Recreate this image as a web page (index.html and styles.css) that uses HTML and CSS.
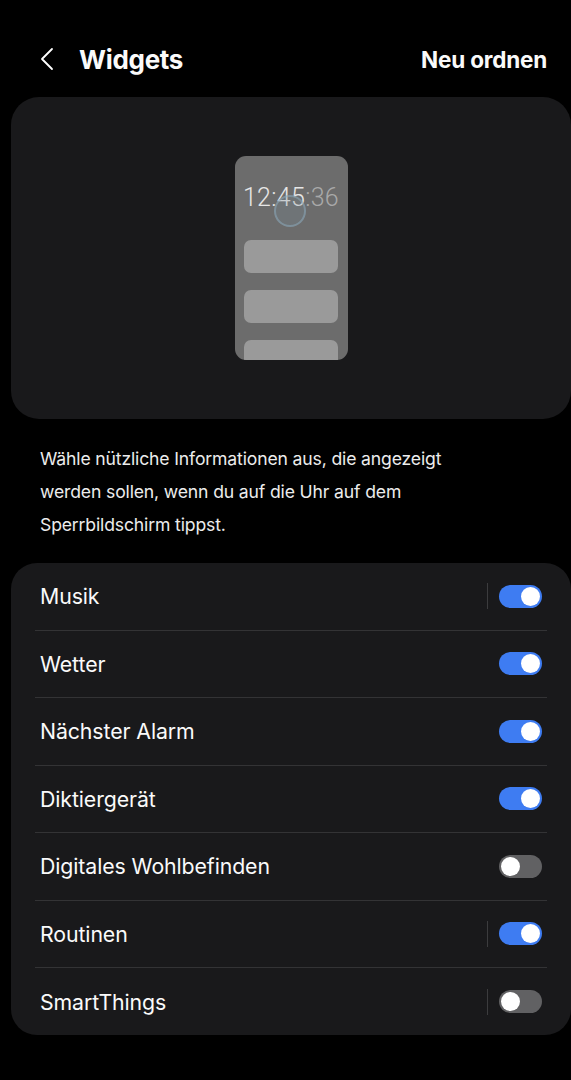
FILE: index.html
```html
<!DOCTYPE html>
<html lang="de">
<head>
    <meta charset="UTF-8">
    <meta name="viewport" content="width=device-width, initial-scale=1.0">
    <title>Widgets</title>
    <link rel="stylesheet" href="styles.css">
</head>
<body>
    <header class="topbar">
        <div class="title-wrap">
            <svg class="back" width="14" height="24" viewBox="0 0 14 24">
                <path d="M12 2 L2 12 L12 22" fill="none" stroke="#fff" stroke-width="1.8" stroke-linecap="round" stroke-linejoin="round"/>
            </svg>
            <h1>Widgets</h1>
        </div>
        <span class="action">Neu ordnen</span>
    </header>

    <section class="preview">
        <div class="phone">
            <div class="clock"><span class="hm">12:45</span>:36</div>
            <div class="tap"></div>
            <div class="slot"></div>
            <div class="slot"></div>
            <div class="slot"></div>
        </div>
    </section>

    <p class="desc">Wähle nützliche Informationen aus, die angezeigt werden sollen, wenn du auf die Uhr auf dem Sperrbildschirm tippst.</p>

    <ul class="list">
        <li><span>Musik</span><span class="sep"></span><span class="switch on"></span></li>
        <li><span>Wetter</span><span class="switch on"></span></li>
        <li><span>Nächster Alarm</span><span class="switch on"></span></li>
        <li><span>Diktiergerät</span><span class="switch on"></span></li>
        <li><span>Digitales Wohlbefinden</span><span class="switch"></span></li>
        <li><span>Routinen</span><span class="sep"></span><span class="switch on"></span></li>
        <li><span>SmartThings</span><span class="sep"></span><span class="switch"></span></li>
    </ul>
</body>
</html>
```

FILE: styles.css
```css
body {
    margin: 0;
    background: #000;
    color: #fafafa;
    font-family: Inter, Roboto, "Noto Sans", sans-serif;
    width: 571px;
    overflow: hidden;
}
.topbar {
    display: flex;
    align-items: center;
    justify-content: space-between;
    height: 58px;
    padding: 30px 24px 9px 40px;
}
.title-wrap {
    display: flex;
    align-items: center;
    gap: 25px;
}
.back {
    display: block;
}
h1 {
    margin: 0;
    font-size: 26px;
    font-weight: 700;
    letter-spacing: -0.3px;
}
.action {
    font-size: 22.5px;
    font-weight: 700;
    letter-spacing: -0.2px;
}
.preview {
    margin-left: 11px;
    width: 560px;
    height: 322px;
    background: #19191b;
    border-radius: 28px;
    display: flex;
    justify-content: center;
    padding-top: 59px;
    box-sizing: border-box;
}
.phone {
    position: relative;
    width: 113px;
    height: 204px;
    background: #6c6c6c;
    border-radius: 11px;
    overflow: hidden;
    display: flex;
    flex-direction: column;
    align-items: center;
}
.clock {
    margin-top: 27px;
    font-family: Roboto, sans-serif;
    font-size: 25px;
    font-weight: 300;
    color: #a9a9a9;
    letter-spacing: 0.3px;
    line-height: 30px;
}
.clock .hm {
    color: #e6e6e6;
}
.tap {
    position: absolute;
    left: 39px;
    top: 39px;
    width: 28px;
    height: 28px;
    border: 2px solid rgba(140, 170, 185, 0.55);
    border-radius: 50%;
    background: rgba(120, 140, 150, 0.25);
}
.slot {
    width: 94px;
    height: 33px;
    margin-top: 17px;
    background: #9a9a9a;
    border-radius: 7px;
    flex-shrink: 0;
}
.tap + .slot {
    margin-top: 27px;
}
.desc {
    margin: 23px 0 0 40px;
    width: 445px;
    font-size: 17.6px;
    line-height: 33px;
    color: #ececec;
    letter-spacing: -0.15px;
}
.list {
    list-style: none;
    margin: 22px 0 0 11px;
    padding: 0;
    width: 560px;
    background: #19191b;
    border-radius: 26px;
}
.list li {
    display: flex;
    align-items: center;
    height: 67.5px;
    margin: 0 24px;
    padding: 0 5px;
    box-sizing: border-box;
    border-bottom: 1px solid #333335;
    font-size: 21.3px;
    letter-spacing: -0.1px;
}
.list li:last-child {
    border-bottom: none;
    height: 67px;
}
.list li > span:first-child {
    flex: 1;
}
.sep {
    width: 1px;
    height: 26px;
    background: #3c3c3e;
    margin-right: 11px;
}
.switch {
    position: relative;
    width: 43px;
    height: 23px;
    border-radius: 12px;
    background: #616163;
}
.switch::after {
    content: "";
    position: absolute;
    top: 2px;
    left: 2px;
    width: 19px;
    height: 19px;
    border-radius: 50%;
    background: #fff;
}
.switch.on {
    background: #3e7cf2;
}
.switch.on::after {
    left: 22px;
}
```
